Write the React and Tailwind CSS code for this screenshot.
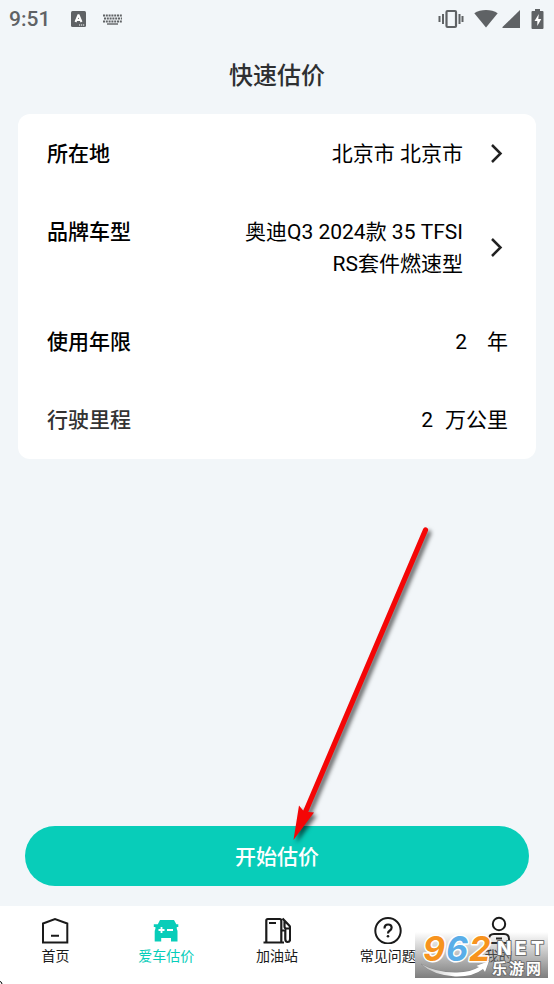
// src/App.jsx
import { useState } from "react";

export default function App() {
  const [years, setYears] = useState("2");
  const [mileage, setMileage] = useState("2");

  return (
    <div className="relative flex min-h-screen flex-col overflow-hidden bg-[#f2f6f9] font-[Roboto,'Noto_Sans_CJK_SC',sans-serif] text-black">
      <StatusBar />

      <header className="flex h-[76px] items-center justify-center">
        <h1 className="text-[24px] font-medium leading-8 text-[#2e3032]">快速估价</h1>
      </header>

      <main className="flex flex-1 flex-col">
        <form className="mx-[18px] rounded-xl bg-white pb-px text-[21px] leading-8">
          <PickerRow label="所在地">北京市 北京市</PickerRow>
          <PickerRow label="品牌车型">奥迪Q3 2024款 35 TFSI RS套件燃速型</PickerRow>
          <InputRow id="years" label="使用年限" unit="年" gap="gap-5" value={years} onChange={setYears} />
          <InputRow
            id="mileage"
            label="行驶里程"
            labelColor="text-[#333333]"
            unit="万公里"
            gap="gap-3"
            value={mileage}
            onChange={setMileage}
          />
        </form>

        <div className="relative mt-auto px-[25px] pb-5">
          <button
            type="button"
            className="h-[60px] w-full rounded-full bg-[#08cdb9] pt-[2px] text-[21px] font-medium leading-8 text-white"
          >
            开始估价
          </button>
          <Arrow />
        </div>
      </main>

      <TabBar />
    </div>
  );
}

function StatusBar() {
  return (
    <div className="flex h-[38px] items-center pl-[9px] pr-[10px] text-[#5f6265]">
      <span className="text-[21px] font-medium leading-6">9:51</span>
      <svg className="ml-[21px]" width="15" height="16" viewBox="0 0 15 16">
        <rect width="15" height="16" rx="1.500" fill="currentColor" />
        <path d="M4.500 11 7.300 4.300h.4L10.500 11M5.300 9h4.400" fill="none" stroke="#fff" strokeWidth="2" />
        <path d="M8 14h1.200M10 14h1.200M12 14h1.200" stroke="#fff" strokeWidth="1.200" />
      </svg>
      <svg className="ml-[17px]" width="19" height="11" viewBox="0 0 19 11" stroke="currentColor" fill="none">
        <path d="M0 1.500h19M1 4.500h18M0 7.500h19" strokeWidth="2" strokeDasharray="2 .8" />
        <path d="M4 10h11" strokeWidth="1.400" />
      </svg>

      <div className="ml-auto flex items-center">
        <svg width="26" height="20" viewBox="0 0 26 20" fill="none" stroke="currentColor">
          <rect x="8.500" y="2" width="9.500" height="16" rx="1" strokeWidth="2.200" />
          <path d="M1.500 7v6M24.500 7v6M5 5v10M21.500 5v10" strokeWidth="2" />
        </svg>
        <svg className="ml-[10px]" width="24" height="20" viewBox="0 0 24 20" fill="currentColor">
          <path d="M12 18.500 .3 4.200C6.500-.2 17.500-.2 23.700 4.200Z" />
        </svg>
        <svg className="ml-1" width="18" height="20" viewBox="0 0 18 20" fill="currentColor">
          <path d="M18 1v18H.5V18Z" />
        </svg>
        <svg className="ml-[11px]" width="13" height="20" viewBox="0 0 13 20">
          <path d="M4 0h5v2h2.500q1 0 1 1v16q0 1-1 1h-10q-1 0-1-1V3q0-1 1-1H4Z" fill="currentColor" />
          <path d="M7.800 5 3.500 12h2.800v5l4-7H7.300Z" fill="#fff" />
        </svg>
      </div>
    </div>
  );
}

function PickerRow({ label, children }) {
  return (
    <button type="button" className="flex w-full items-center pb-[22px] pl-[29px] pr-[33px] pt-6 text-left">
      <span className="self-start font-medium">{label}</span>
      <span className="ml-auto w-[230px] text-right">{children}</span>
      <svg className="ml-[26px]" width="14" height="20" viewBox="0 0 14 20" fill="none" stroke="#222" strokeWidth="2.500">
        <path d="m3 1 8.500 8.500L3 18" />
      </svg>
    </button>
  );
}

function InputRow({ id, label, labelColor, unit, gap, value, onChange }) {
  return (
    <div className="flex items-center pb-[22px] pl-[29px] pr-7 pt-6">
      <label htmlFor={id} className={`font-medium ${labelColor ?? ""}`}>
        {label}
      </label>
      <div className={`ml-auto flex ${gap}`}>
        <input
          id={id}
          inputMode="numeric"
          value={value}
          onChange={(e) => onChange(e.target.value)}
          className="h-8 w-24 bg-transparent text-right outline-none"
        />
        <span>{unit}</span>
      </div>
    </div>
  );
}

function Arrow() {
  return (
    <svg
      className="pointer-events-none absolute bottom-[60px] left-1/2 drop-shadow-[3px_3px_2px_rgba(0,0,0,0.6)]"
      width="160"
      height="322"
      viewBox="277 524 160 322"
      fill="#f40606"
      aria-hidden="true"
    >
      <path d="M425.500 530 305 813" stroke="#f40606" strokeWidth="5.200" strokeLinecap="round" />
      <path d="m293.500 840 5.500-34.500 5 6 10 1Z" />
    </svg>
  );
}

function TabBar() {
  return (
    <nav className="relative grid h-[78px] grid-cols-5 bg-white pt-[10px] text-[#1a1a1a]">
      <Tab label="首页">
        <path d="M2 7.500 14 3l12.300 4.500v19H2ZM10 19.700h8" />
      </Tab>
      <Tab label="爱车估价" active>
        <path
          d="M8 4h14l2.300 4.300h2V11h-1.500v2q.7 1 .7 2.500v10h-6.500V22H9.200v3.500H2.700v-10q0-1.500.7-2.500v-2H1.800V8.300h4Z"
          fill="currentColor"
          stroke="none"
        />
        <path d="M6.500 14h6M9.500 11v6M15 14h6" stroke="#fff" strokeWidth="1.800" />
      </Tab>
      <Tab label="加油站">
        <path d="M3.300 26V4.500q0-1.500 1.500-1.500h12q1.500 0 1.500 1.500V26M.5 26.500h20.500M6 7h7" strokeWidth="2.200" />
        <path
          d="m19.500 2.500 6.700 7q.9.900.9 2.300v11.200q0 3-2.400 3t-2.400-3v-8.500H18.500M21.500 5v5.500q0 2 2 2h3"
          strokeWidth="2.200"
        />
      </Tab>
      <Tab label="常见问题">
        <circle cx="14" cy="14.700" r="12.700" />
        <path d="M10.500 12.500q0-4 3.600-4t3.500 3.300q0 1.700-2 2.900-1.600 1-1.600 2.800" strokeWidth="2.200" />
        <circle cx="14" cy="20.300" r="1.300" fill="currentColor" stroke="none" />
      </Tab>
      <Tab label="我的">
        <circle cx="14" cy="8" r="6.200" />
        <path d="M4 27v-4q0-5 5-5h10q5 0 5 5v4ZM11 22.500h6" />
      </Tab>

      <svg className="absolute bottom-0 left-0" width="3" height="3" viewBox="0 0 3 3" aria-hidden="true">
        <path d="M0 .5Q1.500.5 2 3" fill="none" stroke="#000" />
      </svg>
      <Watermark />
    </nav>
  );
}

function Tab({ label, active, children }) {
  return (
    <a href="#" className={`flex flex-col items-center gap-[2px] ${active ? "text-[#08cdb9]" : ""}`}>
      <svg width="28" height="28" viewBox="0 0 28 28" fill="none" stroke="currentColor" strokeWidth="2">
        {children}
      </svg>
      <span className="text-[14px] leading-5">{label}</span>
    </a>
  );
}

function Watermark() {
  return (
    <svg
      className="pointer-events-none absolute bottom-[6px] right-[6px] overflow-visible"
      width="133"
      height="46"
      viewBox="0 0 133 46"
      paintOrder="stroke"
      strokeLinejoin="round"
    >
      <defs>
        <linearGradient id="shade" x1="0" y1="0" x2="0" y2="1">
          <stop offset="0" stopColor="#777" stopOpacity="0" />
          <stop offset="1" stopColor="#777" stopOpacity=".95" />
        </linearGradient>
        <linearGradient id="swoosh" x1="0" y1="0" x2="1" y2="0">
          <stop offset="0" stopColor="#fff" stopOpacity=".4" />
          <stop offset=".5" stopColor="#fff" />
        </linearGradient>
      </defs>
      <rect width="133" height="46" fill="url(#shade)" />
      <path
        d="M6 32Q22 41 42 40.500 56 40 64 35l-3-1 13-5-4 11-2-3Q58 45 40 44.500 18 43 6 32Z"
        fill="url(#swoosh)"
        stroke="#777"
        strokeWidth=".4"
      />
      <g fontFamily="Inter, sans-serif" fontWeight="700" fontStyle="italic" fontSize="34" stroke="#fff" strokeWidth="3">
        <text x="8" y="29" fill="#f7931e">9</text>
        <text x="31" y="29" fill="#5aaee8">6</text>
        <text x="54" y="29" fill="#f7931e">2</text>
      </g>
      <g fill="#fff" stroke="#707070" strokeWidth="2">
        <g fontFamily="Inter, sans-serif" fontWeight="800" fontSize="19">
          <text x="82" y="23">N</text>
          <text x="100" y="23">E</text>
          <text x="116" y="23">T</text>
        </g>
        <g fontFamily="'Noto Sans CJK SC', sans-serif" fontWeight="700" fontSize="15">
          <text x="77" y="42">乐</text>
          <text x="94" y="42">游</text>
          <text x="111" y="42">网</text>
        </g>
      </g>
    </svg>
  );
}
